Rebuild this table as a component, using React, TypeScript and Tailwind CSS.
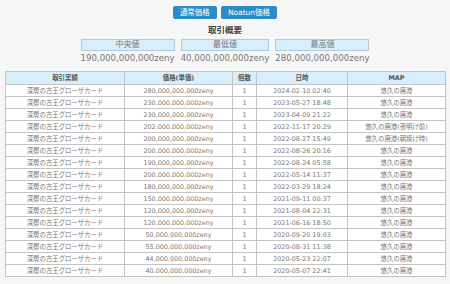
const rows: [string, string, string][] = [
  ["280,000,000,000zeny", "2024-02-10 02:40", "悠久の廃港"],
  ["230,000,000,000zeny", "2023-05-27 18:48", "悠久の廃港"],
  ["230,000,000,000zeny", "2023-04-09 21:22", "悠久の廃港"],
  ["202,000,000,000zeny", "2022-11-17 20:29", "悠久の廃港(夜明け前)"],
  ["200,000,000,000zeny", "2022-08-27 15:49", "悠久の廃港(朝焼け時)"],
  ["200,000,000,000zeny", "2022-08-26 20:16", "悠久の廃港"],
  ["190,000,000,000zeny", "2022-08-24 05:58", "悠久の廃港"],
  ["200,000,000,000zeny", "2022-05-14 11:37", "悠久の廃港"],
  ["180,000,000,000zeny", "2022-03-29 18:24", "悠久の廃港"],
  ["150,000,000,000zeny", "2021-09-11 00:37", "悠久の廃港"],
  ["120,000,000,000zeny", "2021-08-04 22:31", "悠久の廃港"],
  ["120,000,000,000zeny", "2021-06-16 18:50", "悠久の廃港"],
  ["50,000,000,000zeny", "2020-09-20 19:03", "悠久の廃港"],
  ["55,000,000,000zeny", "2020-08-31 11:38", "悠久の廃港"],
  ["44,000,000,000zeny", "2020-05-23 22:07", "悠久の廃港"],
  ["40,000,000,000zeny", "2020-05-07 22:41", "悠久の廃港"],
];

const stats = [
  { label: "中央値", value: "190,000,000,000zeny" },
  { label: "最低値", value: "40,000,000,000zeny" },
  { label: "最高値", value: "280,000,000,000zeny" },
];

function Stat({ label, value }: { label: string; value: string }) {
  return (
    <div className="flex flex-col items-stretch">
      <div className="h-[12px] border border-[#b5cad8] bg-[#d9eefb] text-center text-[8px] leading-[10px] text-[#777]">
        {label}
      </div>
      <div className="mt-[2px] text-center text-[8.6px] leading-[11px] text-[#777]">{value}</div>
    </div>
  );
}

export default function App() {
  const cell = "border border-[#c4c4c4] h-[12px] p-0 text-center";
  return (
    <div
      className="h-[284px] w-[450px] overflow-hidden bg-[#f6f6f6] px-[5px] pt-[6px]"
      style={{ fontFamily: '"DejaVu Sans", "Noto Sans CJK JP", sans-serif' }}
    >
      <div className="flex justify-center gap-[4px]">
        <button className="h-[13px] rounded-[2px] bg-[#2a8bc6] px-[7px] text-[7.5px] leading-[13px] text-white">
          通常価格
        </button>
        <button className="h-[13px] rounded-[2px] bg-[#2a8bc6] px-[7px] text-[7.5px] leading-[13px] text-white">
          Noatun価格
        </button>
      </div>
      <div className="mt-[5px] text-center text-[8.5px] font-bold leading-[12px] text-[#444]">取引概要</div>
      <div className="mt-[3px] flex justify-center gap-[6px]">
        {stats.map((s) => (
          <Stat key={s.label} label={s.label} value={s.value} />
        ))}
      </div>
      <table className="mt-[7px] w-[440px] table-fixed border-collapse bg-white text-[6.4px] leading-[10px] text-[#777]">
        <colgroup>
          <col className="w-[119px]" />
          <col className="w-[108px]" />
          <col className="w-[24px]" />
          <col className="w-[91px]" />
          <col className="w-[98px]" />
        </colgroup>
        <thead>
          <tr className="bg-[#d9eefb] text-[#555]">
            <th className={`${cell} h-[13px] font-bold`}>取引実績</th>
            <th className={`${cell} h-[13px] font-bold`}>価格(単価)</th>
            <th className={`${cell} h-[13px] font-bold`}>個数</th>
            <th className={`${cell} h-[13px] font-bold`}>日時</th>
            <th className={`${cell} h-[13px] font-bold`}>MAP</th>
          </tr>
        </thead>
        <tbody>
          {rows.map((r, i) => (
            <tr key={i}>
              <td className={cell}>深層の古王グローザカード</td>
              <td className={cell}>{r[0]}</td>
              <td className={cell}>1</td>
              <td className={cell}>{r[1]}</td>
              <td className={cell}>{r[2]}</td>
            </tr>
          ))}
        </tbody>
      </table>
    </div>
  );
}
